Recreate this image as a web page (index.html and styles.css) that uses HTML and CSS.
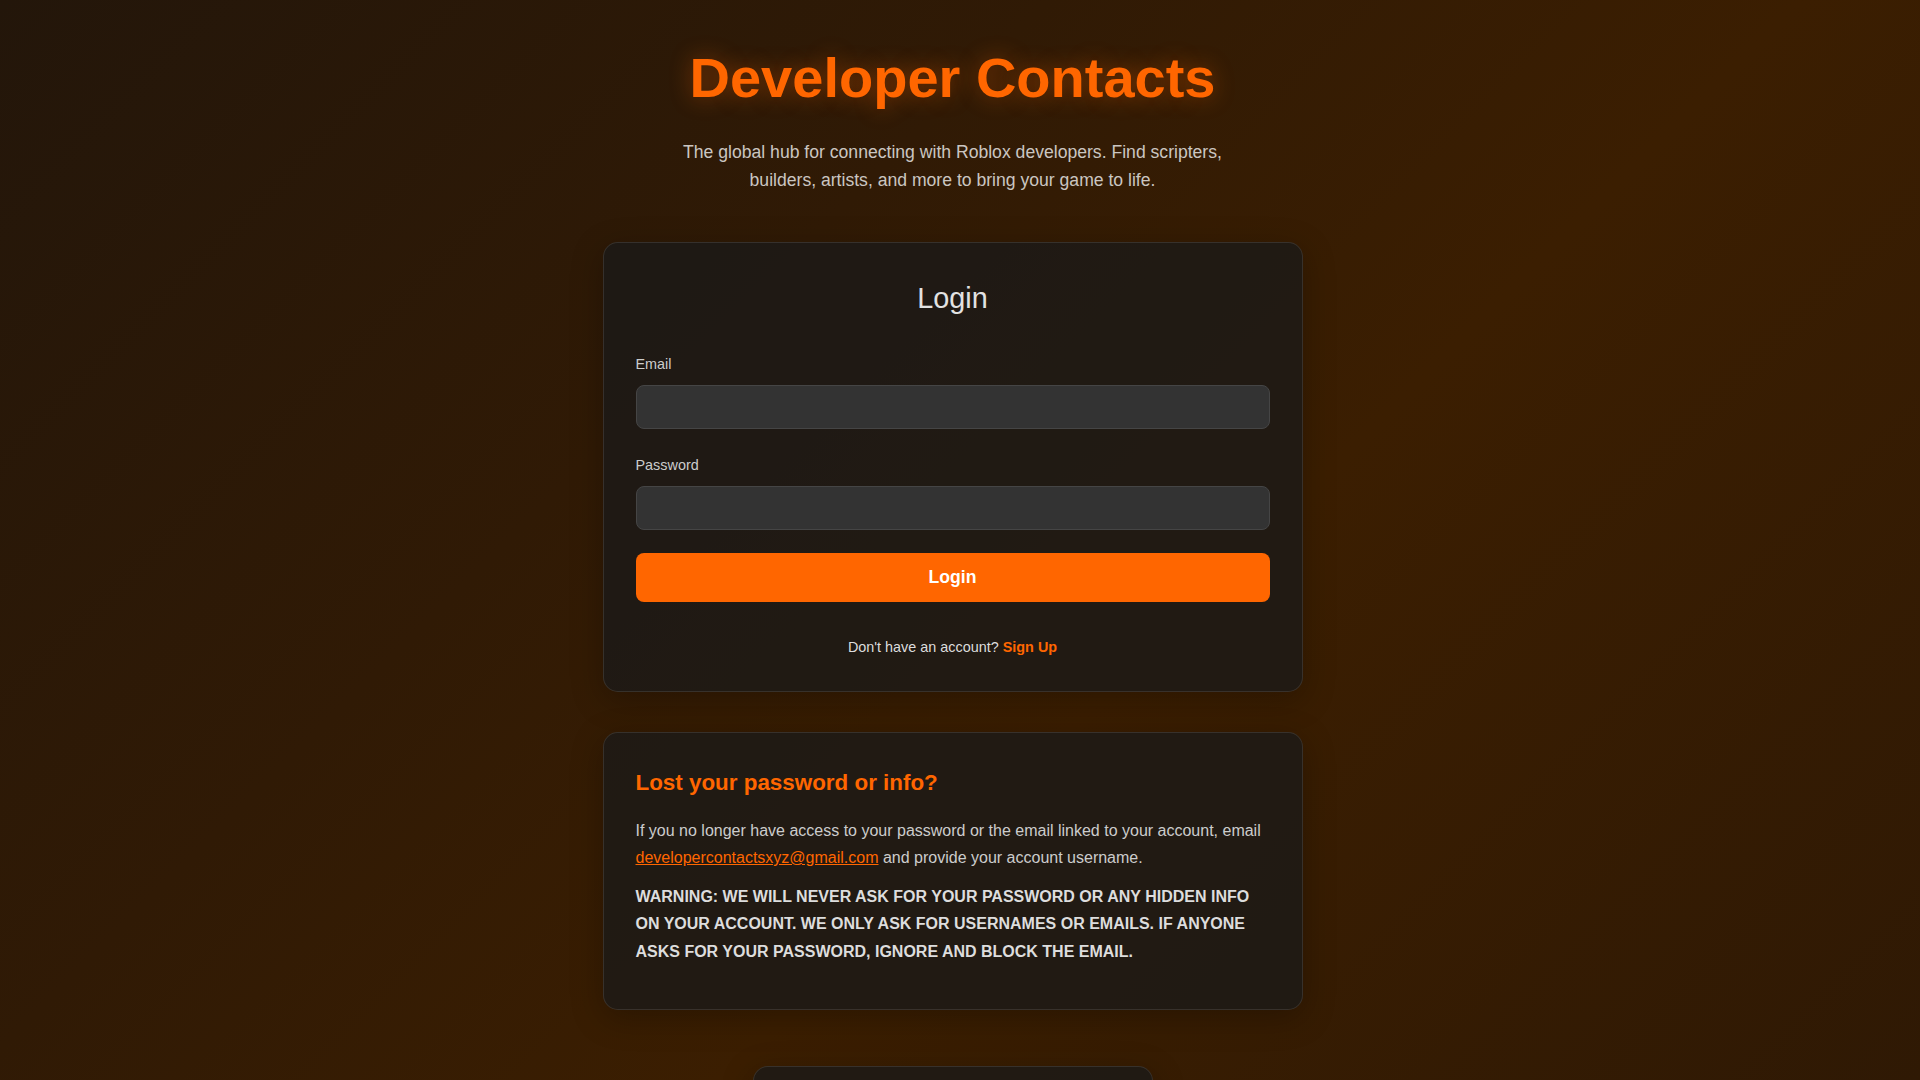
FILE: index.html
```html
<!DOCTYPE html>
<html lang="en">
<head>
<meta charset="utf-8">
<title>Developer Contacts</title>
<link rel="stylesheet" href="styles.css">
</head>
<body>
<div class="page">
  <header class="hero">
    <h1 class="title">Developer Contacts</h1>
    <p class="subtitle">The global hub for connecting with Roblox developers. Find scripters, builders, artists, and more to bring your game to life.</p>
  </header>
  <main class="stack">
    <section class="card login-card">
      <h2 class="card-title">Login</h2>
      <form class="form">
        <div class="field">
          <label class="label" for="email">Email</label>
          <input class="input" id="email" type="email">
        </div>
        <div class="field field-last">
          <label class="label" for="password">Password</label>
          <input class="input" id="password" type="password">
        </div>
        <button class="btn" type="button">Login</button>
      </form>
      <p class="switch">Don't have an account? <a class="switch-link" href="#">Sign Up</a></p>
    </section>
    <section class="card info-card">
      <h3 class="info-title">Lost your password or info?</h3>
      <p class="info-text">If you no longer have access to your password or the email linked to your account, email <a class="mail-link" href="#">developercontactsxyz@gmail.com</a> and provide your account username.</p>
      <p class="info-warning">WARNING: WE WILL NEVER ASK FOR YOUR PASSWORD OR ANY HIDDEN INFO ON YOUR ACCOUNT. WE ONLY ASK FOR USERNAMES OR EMAILS. IF ANYONE ASKS FOR YOUR PASSWORD, IGNORE AND BLOCK THE EMAIL.</p>
    </section>
    <footer class="card footer-card">
      <p class="footer-text">© Developer Contacts</p>
    </footer>
  </main>
</div>
</body>
</html>
```
FILE: styles.css
```css
html, body {
  margin: 0;
  padding: 0;
}
body {
  min-height: 100vh;
  font-family: "Liberation Sans", Arial, sans-serif;
  color: #cccccc;
  background: linear-gradient(135deg, #23160a 0%, #301a05 35%, #3b1e01 60%, #2f1904 100%);
  background-attachment: fixed;
}
.page {
  display: flex;
  flex-direction: column;
  align-items: center;
  padding: 44px 35px 40px 20px;
}
.hero {
  display: flex;
  flex-direction: column;
  align-items: center;
  text-align: center;
}
.title {
  margin: 0 0 27px;
  font-size: 56px;
  line-height: 1.2;
  font-weight: 700;
  color: #ff6600;
  text-shadow: 0 0 22px rgba(255, 102, 0, 0.4);
}
.subtitle {
  margin: 0 0 48px;
  max-width: 600px;
  font-size: 17.6px;
  line-height: 1.6;
  color: #cbc6c1;
}
.stack {
  display: flex;
  flex-direction: column;
  align-items: center;
  width: 100%;
}
.card {
  box-sizing: border-box;
  width: 700px;
  background: rgba(26, 26, 26, 0.75);
  border: 1px solid rgba(255, 255, 255, 0.1);
  border-radius: 15px;
  box-shadow: 0 8px 32px rgba(0, 0, 0, 0.25);
}
.login-card {
  padding: 38px 32px 34px;
}
.card-title {
  margin: 0 0 37px;
  font-size: 28.8px;
  line-height: 1.2;
  font-weight: 400;
  text-align: center;
  color: #e2e2e2;
}
.form {
  display: flex;
  flex-direction: column;
}
.field {
  display: flex;
  flex-direction: column;
  margin-bottom: 25px;
}
.field-last {
  margin-bottom: 23px;
}
.label {
  font-size: 14.4px;
  line-height: 22px;
  margin-bottom: 10px;
  color: #cccccc;
}
.input {
  box-sizing: border-box;
  height: 44px;
  width: 100%;
  padding: 12px;
  font-size: 16px;
  font-family: inherit;
  color: #eeeeee;
  background: #333333;
  border: 1px solid #454545;
  border-radius: 8px;
  outline: none;
}
.btn {
  height: 49px;
  width: 100%;
  border: none;
  border-radius: 8px;
  background: #ff6600;
  color: #ffffff;
  font-family: inherit;
  font-size: 17.6px;
  font-weight: 700;
  cursor: pointer;
}
.switch {
  margin: 35px 0 0;
  font-size: 14.4px;
  line-height: 20px;
  text-align: center;
  color: #dddddd;
}
.switch-link {
  color: #ff6600;
  font-weight: 700;
  text-decoration: none;
}
.info-card {
  margin-top: 40px;
  padding: 37px 32px 32px;
}
.info-title {
  margin: 0 0 20px;
  font-size: 22.4px;
  line-height: 1.2;
  font-weight: 700;
  color: #ff6600;
}
.info-text {
  margin: 0 0 12px;
  font-size: 16px;
  line-height: 1.7;
  color: #cccccc;
}
.mail-link {
  color: #ff6600;
  text-decoration: underline;
}
.info-warning {
  margin: 0 0 12px;
  font-size: 16px;
  line-height: 1.7;
  font-weight: 700;
  color: #dddddd;
}
.footer-card {
  width: 400px;
  margin-top: 56px;
  padding: 24px;
  text-align: center;
}
.footer-text {
  margin: 0;
  font-size: 14.4px;
  color: #aaaaaa;
}
```
